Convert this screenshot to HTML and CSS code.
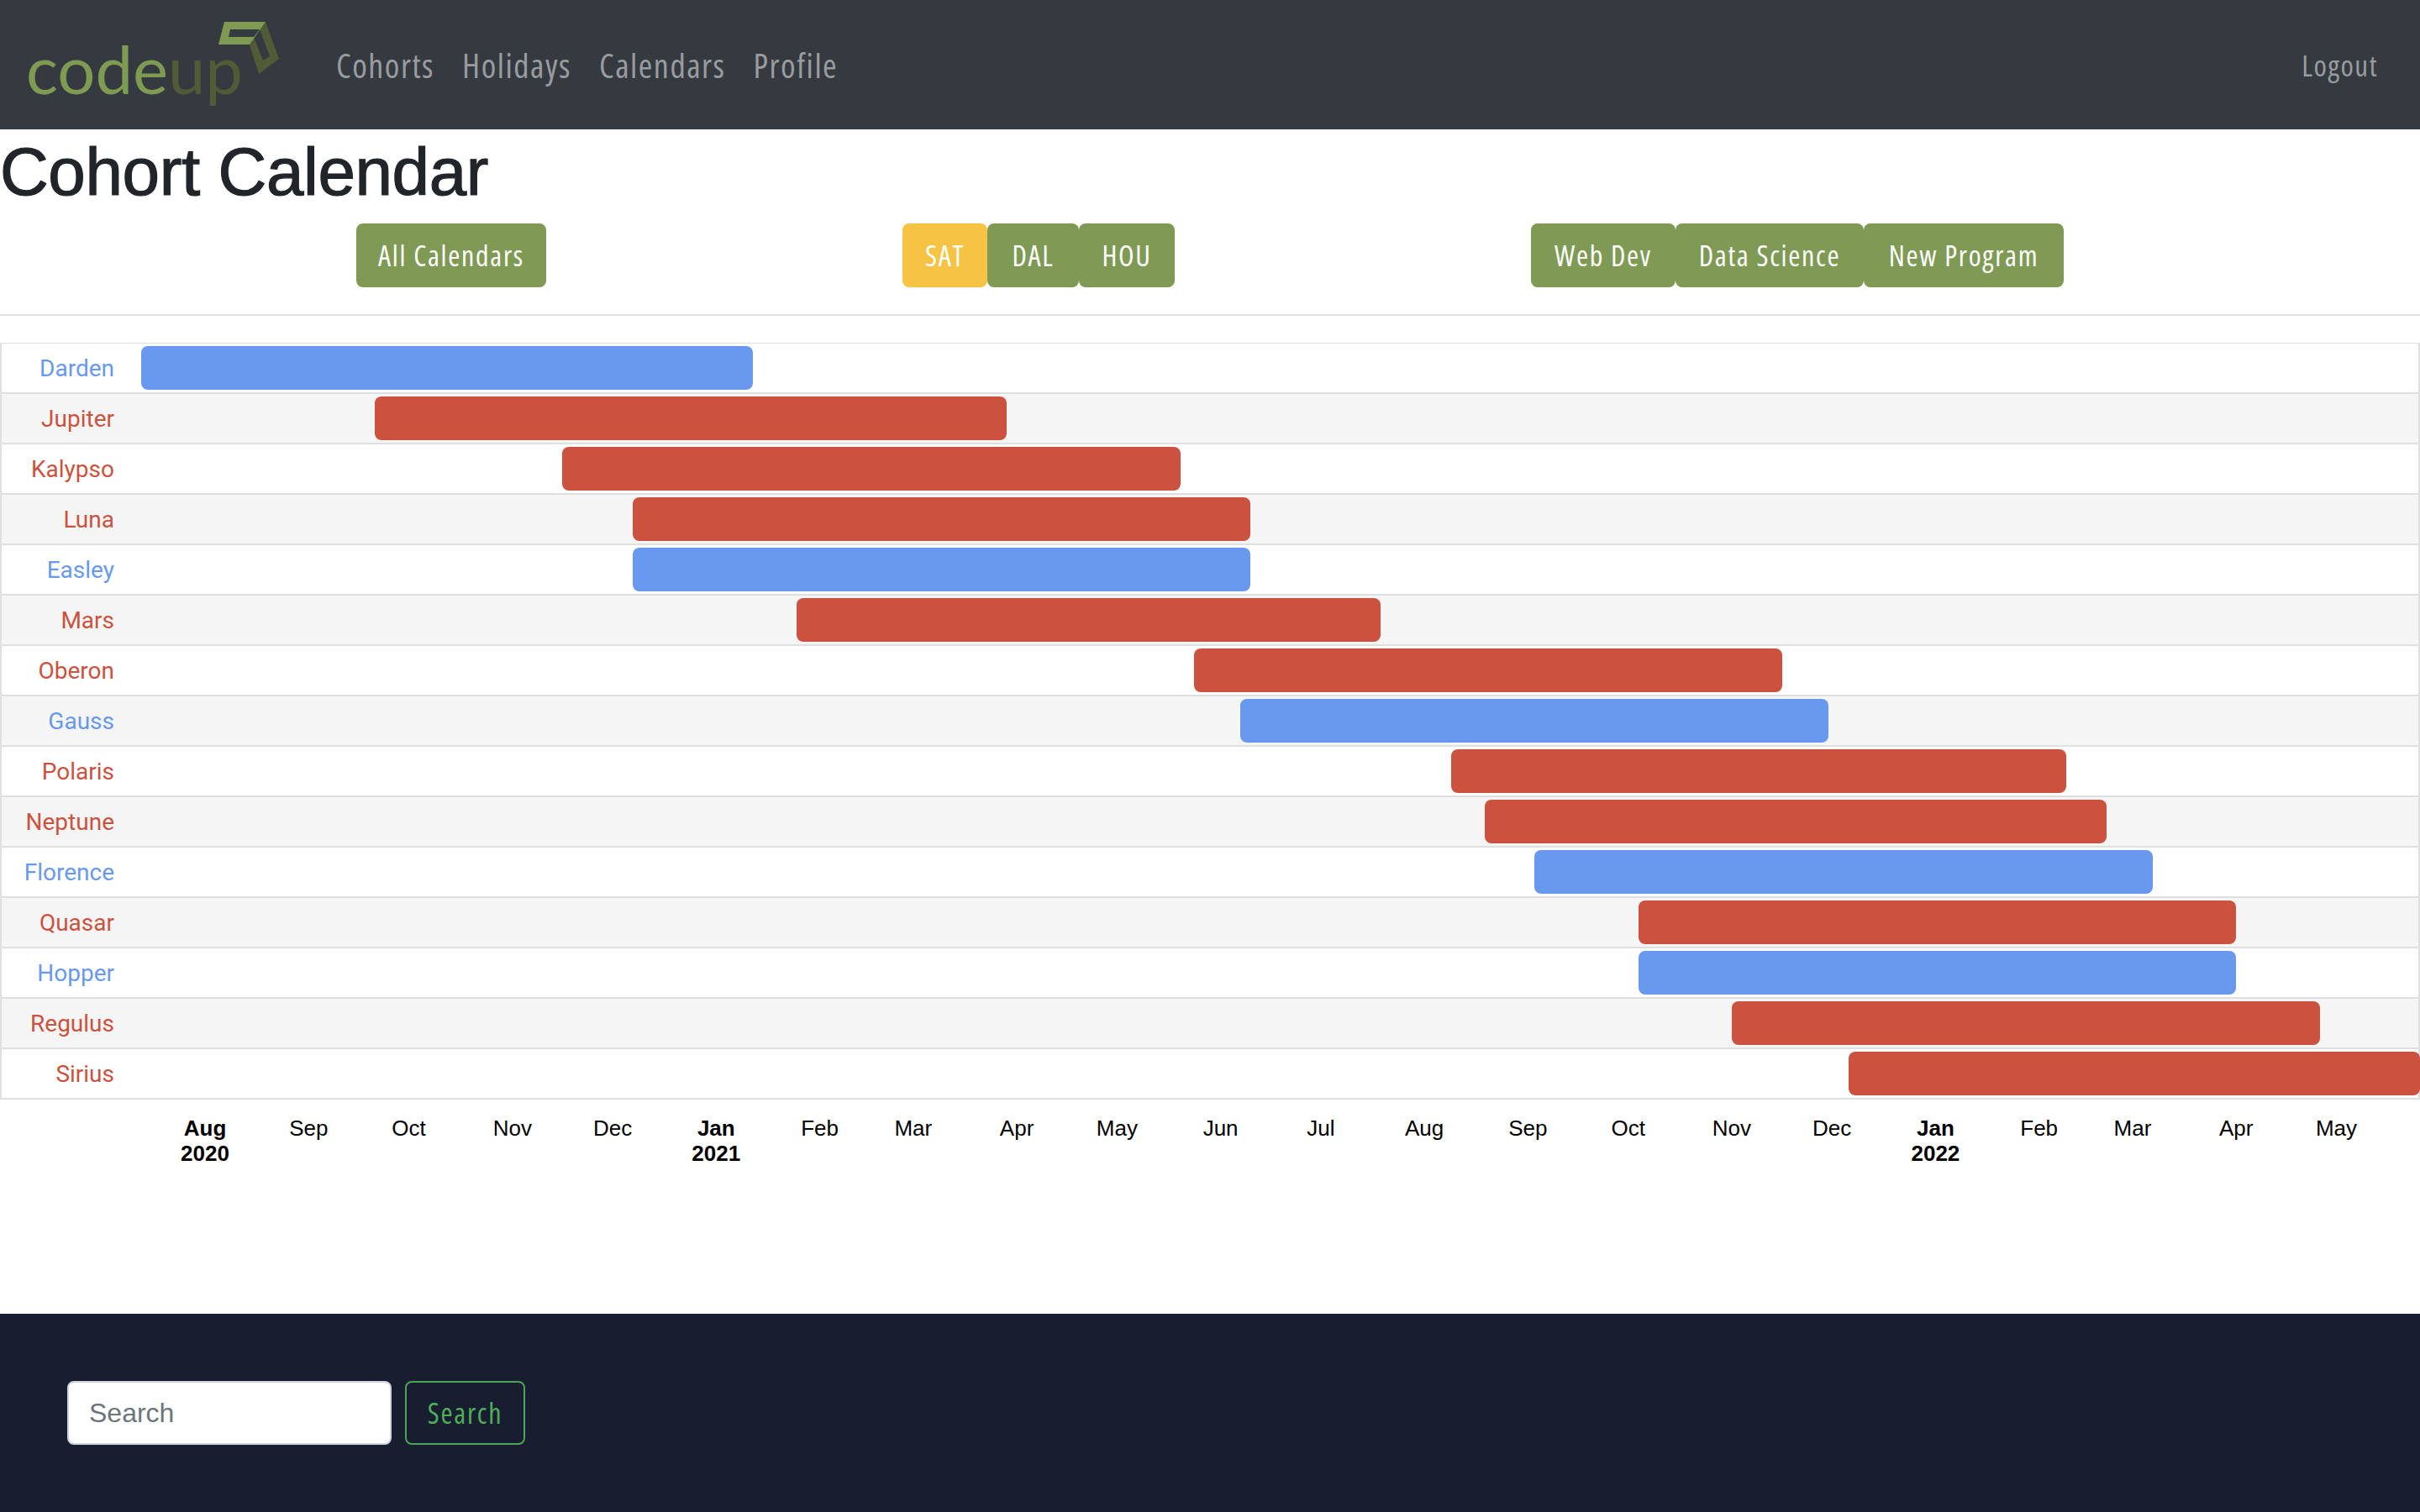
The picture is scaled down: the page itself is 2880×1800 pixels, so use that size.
FILE: index.html
```html
<!DOCTYPE html>
<html lang="en">
<head>
  <meta charset="UTF-8">
  <title>Cohort Calendar</title>
  <link rel="stylesheet" href="styles.css">
</head>
<body>

  <nav class="navbar">
    <a class="brand" href="#">
      <svg class="brand-logo" viewBox="30 20 310 114" width="310" height="114">
        <text class="logo-text" x="31" y="112" textLength="258" lengthAdjust="spacingAndGlyphs"><tspan class="logo-light">code</tspan><tspan class="logo-dark">up</tspan></text>
        <path class="logo-dark-shape" d="M316 26 L332 70 L308 88 L297 53 L302 44 L313 72 L321 67 L309 35 Z" />
        <path class="logo-light-shape" fill-rule="evenodd" d="M267 26 H316 L297 53 H260 Z M274 35 L272 44 H302 L309 35 Z" />
      </svg>
    </a>
    <ul class="nav-links">
      <li><a href="#">Cohorts</a></li>
      <li><a href="#">Holidays</a></li>
      <li><a href="#">Calendars</a></li>
      <li><a href="#">Profile</a></li>
    </ul>
    <a class="logout" href="#">Logout</a>
  </nav>

  <main class="content">
    <h1>Cohort Calendar</h1>

    <div class="filters">
      <div class="btn-group">
        <a class="btn btn-all" href="#">All Calendars</a>
      </div>
      <div class="btn-group">
        <a class="btn btn-sat active" href="#">SAT</a>
        <a class="btn btn-dal" href="#">DAL</a>
        <a class="btn btn-hou" href="#">HOU</a>
      </div>
      <div class="btn-group">
        <a class="btn btn-web" href="#">Web Dev</a>
        <a class="btn btn-data" href="#">Data Science</a>
        <a class="btn btn-new" href="#">New Program</a>
      </div>
    </div>

    <hr>

    <div class="timeline">
      <div class="row"><span class="label blue">Darden</span><div class="bar blue-bar" style="margin-left:0;width:728px"></div></div>
      <div class="row"><span class="label red">Jupiter</span><div class="bar red-bar" style="margin-left:278px;width:752px"></div></div>
      <div class="row"><span class="label red">Kalypso</span><div class="bar red-bar" style="margin-left:501px;width:736px"></div></div>
      <div class="row"><span class="label red">Luna</span><div class="bar red-bar" style="margin-left:585px;width:735px"></div></div>
      <div class="row"><span class="label blue">Easley</span><div class="bar blue-bar" style="margin-left:585px;width:735px"></div></div>
      <div class="row"><span class="label red">Mars</span><div class="bar red-bar" style="margin-left:780px;width:695px"></div></div>
      <div class="row"><span class="label red">Oberon</span><div class="bar red-bar" style="margin-left:1253px;width:700px"></div></div>
      <div class="row"><span class="label blue">Gauss</span><div class="bar blue-bar" style="margin-left:1308px;width:700px"></div></div>
      <div class="row"><span class="label red">Polaris</span><div class="bar red-bar" style="margin-left:1559px;width:732px"></div></div>
      <div class="row"><span class="label red">Neptune</span><div class="bar red-bar" style="margin-left:1599px;width:740px"></div></div>
      <div class="row"><span class="label blue">Florence</span><div class="bar blue-bar" style="margin-left:1658px;width:736px"></div></div>
      <div class="row"><span class="label red">Quasar</span><div class="bar red-bar" style="margin-left:1782px;width:711px"></div></div>
      <div class="row"><span class="label blue">Hopper</span><div class="bar blue-bar" style="margin-left:1782px;width:711px"></div></div>
      <div class="row"><span class="label red">Regulus</span><div class="bar red-bar" style="margin-left:1893px;width:700px"></div></div>
      <div class="row"><span class="label red">Sirius</span><div class="bar red-bar" style="margin-left:2032px;width:680px"></div></div>
    </div>

    <div class="axis">
      <div class="tick d31"><span class="year"><b>Aug</b><b>2020</b></span></div>
      <div class="tick d30"><span>Sep</span></div>
      <div class="tick d31"><span>Oct</span></div>
      <div class="tick d30"><span>Nov</span></div>
      <div class="tick d31"><span>Dec</span></div>
      <div class="tick d31"><span class="year"><b>Jan</b><b>2021</b></span></div>
      <div class="tick d28"><span>Feb</span></div>
      <div class="tick d31"><span>Mar</span></div>
      <div class="tick d30"><span>Apr</span></div>
      <div class="tick d31"><span>May</span></div>
      <div class="tick d30"><span>Jun</span></div>
      <div class="tick d31"><span>Jul</span></div>
      <div class="tick d31"><span>Aug</span></div>
      <div class="tick d30"><span>Sep</span></div>
      <div class="tick d31"><span>Oct</span></div>
      <div class="tick d30"><span>Nov</span></div>
      <div class="tick d31"><span>Dec</span></div>
      <div class="tick d31"><span class="year"><b>Jan</b><b>2022</b></span></div>
      <div class="tick d28"><span>Feb</span></div>
      <div class="tick d31"><span>Mar</span></div>
      <div class="tick d30"><span>Apr</span></div>
      <div class="tick d31"><span>May</span></div>
    </div>
  </main>

  <footer class="footer">
    <form class="search-form">
      <input class="search-input" type="search" placeholder="Search">
      <button class="search-btn" type="submit">Search</button>
    </form>
  </footer>

</body>
</html>
```

FILE: styles.css
```css
/* -------- Colors -------- */
:root {
  --navBackground: #353a40;
  --navLink: #999c9f;
  --green: #7f9a54;
  --yellow: #f6c344;
  --blue: #6899ee;
  --red: #cc5240;
  --rowBorder: #e0e0e0;
  --rowStripe: #f5f5f5;
  --footerBackground: #181e30;
  --day: 3.976px;
  --navFont: "Open Sans", "Noto Sans", sans-serif;
}

* {
  box-sizing: border-box;
}
body {
  margin: 0;
  min-height: 100vh;
  display: flex;
  flex-direction: column;
  background: #fff;
  font-family: "Liberation Sans", sans-serif;
  color: #212529;
}
a {
  text-decoration: none;
}

/*  Navbar  */
.navbar {
  height: 154px;
  display: flex;
  align-items: center;
  padding: 0 50px 0 30px;
  background: var(--navBackground);
}
.brand {
  display: flex;
  width: 370px;
}
.brand-logo {
  display: block;
}
.logo-text {
  font-family: "Lato", sans-serif;
  font-size: 80px;
  font-weight: 400;
}
.logo-light,
.logo-light-shape {
  fill: #7f9a52;
}
.logo-dark,
.logo-dark-shape {
  fill: #505c35;
}
.nav-links {
  display: flex;
  gap: 33px;
  margin: 0;
  padding: 0;
  list-style: none;
}
.nav-links a,
.logout {
  font-family: var(--navFont);
  font-stretch: 75%;
  font-weight: 500;
  font-size: 40px;
  letter-spacing: 1.5px;
  color: var(--navLink);
}
.logout {
  margin-left: auto;
  font-size: 35px;
}

/*  Heading and filter buttons  */
.content {
  flex: 1;
}
h1 {
  margin: 0 0 13px;
  padding-top: 3px;
  font-size: 80px;
  font-weight: 500;
  line-height: 1.2;
  letter-spacing: -0.4px;
  -webkit-text-stroke: 1.2px #212529;
}
.filters {
  display: flex;
  justify-content: space-evenly;
}
.btn-group {
  display: flex;
}
.btn {
  height: 76px;
  display: flex;
  align-items: center;
  justify-content: center;
  border-radius: 8px;
  background: var(--green);
  color: #fff;
  font-family: var(--navFont);
  font-stretch: 75%;
  font-weight: 500;
  font-size: 34px;
  letter-spacing: 1.7px;
}
.btn.active {
  background: var(--yellow);
}
.btn-all { width: 226px; }
.btn-sat { width: 101px; }
.btn-dal { width: 109px; }
.btn-hou { width: 114px; }
.btn-web { width: 172px; }
.btn-data { width: 224px; }
.btn-new { width: 238px; }

hr {
  height: 2px;
  margin: 32px 0;
  border: 0;
  background: var(--rowBorder);
}

/*  Timeline  */
.timeline {
  border-top: 1px solid var(--rowBorder);
  border-left: 2px solid var(--rowBorder);
  border-right: 2px solid var(--rowBorder);
}
.row {
  height: 60px;
  display: flex;
  align-items: center;
  border-bottom: 2px solid var(--rowBorder);
}
.row:nth-child(even) {
  background: var(--rowStripe);
}
.label {
  width: 166px;
  flex: none;
  padding-right: 32px;
  text-align: right;
  font-family: Roboto, sans-serif;
  font-size: 28px;
}
.blue { color: var(--blue); }
.red { color: var(--red); }
.bar {
  height: 52px;
  flex: none;
  border-radius: 8px;
}
.blue-bar { background: var(--blue); }
.red-bar { background: var(--red); }

/*  Axis labels  */
.axis {
  display: flex;
  padding: 19px 0 0 244px;
  color: #000;
  font-size: 26px;
  line-height: 30px;
}
.tick {
  flex: none;
  display: flex;
}
.tick span {
  width: 0;
  display: flex;
  flex-direction: column;
  align-items: center;
  white-space: nowrap;
}
.d28 { width: calc(var(--day) * 28); }
.d30 { width: calc(var(--day) * 30); }
.d31 { width: calc(var(--day) * 31); }

/*  Footer search  */
.footer {
  padding: 80px;
  background: var(--footerBackground);
}
.search-form {
  display: flex;
  gap: 16px;
}
.search-input {
  width: 386px;
  height: 76px;
  padding: 12px 24px;
  border: 2px solid #ced4da;
  border-radius: 8px;
  background: #fff;
  font-family: "Liberation Sans", sans-serif;
  font-size: 32px;
}
.search-input::placeholder {
  color: #6c757d;
}
.search-btn {
  width: 143px;
  height: 76px;
  border: 2px solid #4ba354;
  border-radius: 8px;
  background: transparent;
  color: #4fae58;
  font-family: var(--navFont);
  font-stretch: 75%;
  font-weight: 500;
  font-size: 34px;
  letter-spacing: 1.7px;
}
```
